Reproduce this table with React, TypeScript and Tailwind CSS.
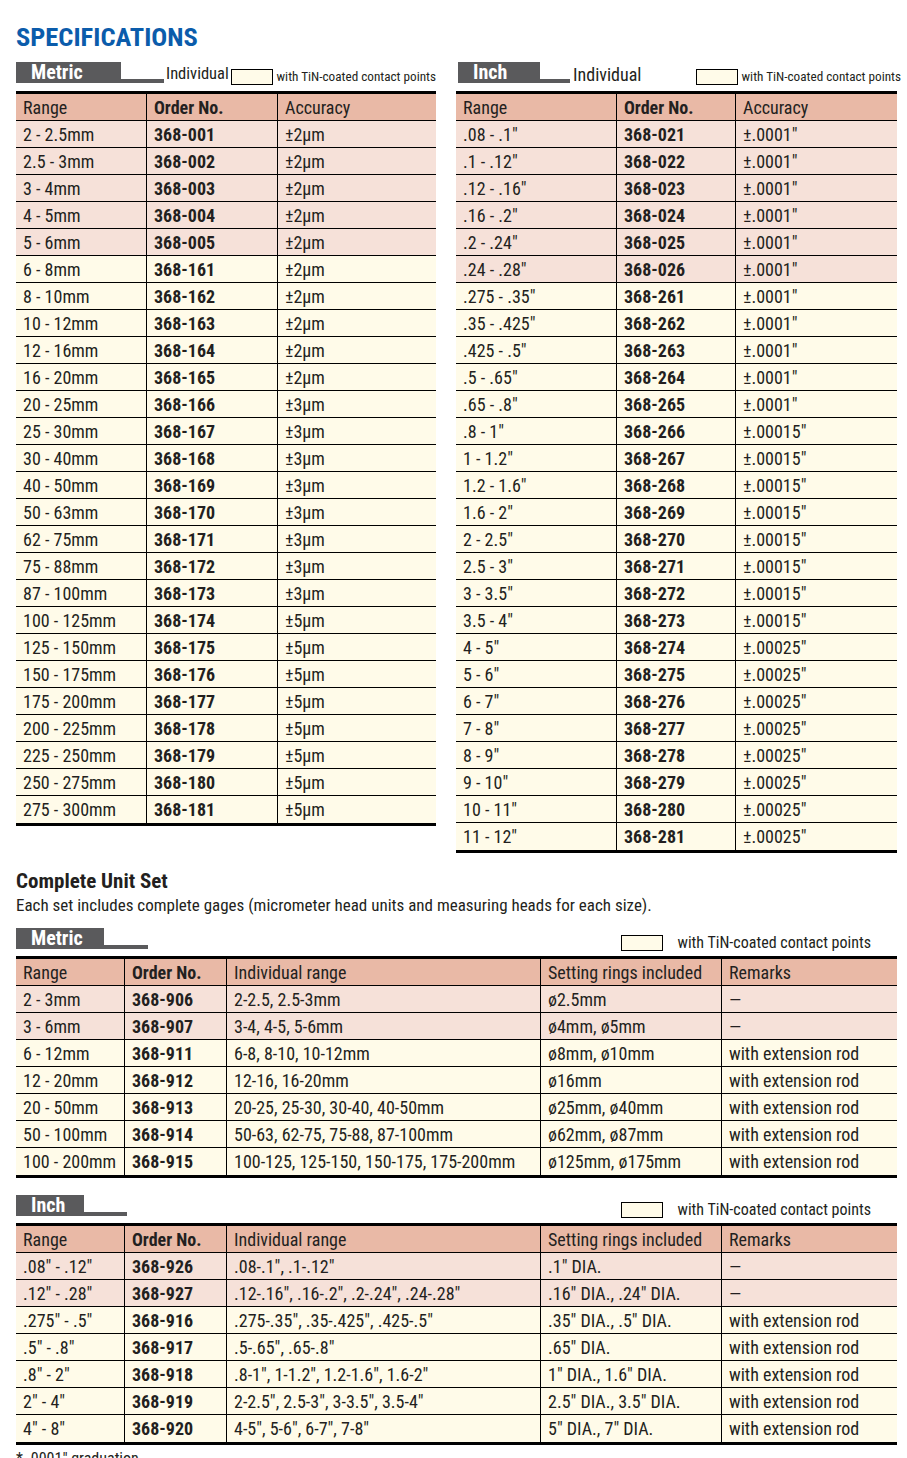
import React from "react";

const metric = [
  ["2 - 2.5mm", "368-001", "±2µm"],
  ["2.5 - 3mm", "368-002", "±2µm"],
  ["3 - 4mm", "368-003", "±2µm"],
  ["4 - 5mm", "368-004", "±2µm"],
  ["5 - 6mm", "368-005", "±2µm"],
  ["6 - 8mm", "368-161", "±2µm"],
  ["8 - 10mm", "368-162", "±2µm"],
  ["10 - 12mm", "368-163", "±2µm"],
  ["12 - 16mm", "368-164", "±2µm"],
  ["16 - 20mm", "368-165", "±2µm"],
  ["20 - 25mm", "368-166", "±3µm"],
  ["25 - 30mm", "368-167", "±3µm"],
  ["30 - 40mm", "368-168", "±3µm"],
  ["40 - 50mm", "368-169", "±3µm"],
  ["50 - 63mm", "368-170", "±3µm"],
  ["62 - 75mm", "368-171", "±3µm"],
  ["75 - 88mm", "368-172", "±3µm"],
  ["87 - 100mm", "368-173", "±3µm"],
  ["100 - 125mm", "368-174", "±5µm"],
  ["125 - 150mm", "368-175", "±5µm"],
  ["150 - 175mm", "368-176", "±5µm"],
  ["175 - 200mm", "368-177", "±5µm"],
  ["200 - 225mm", "368-178", "±5µm"],
  ["225 - 250mm", "368-179", "±5µm"],
  ["250 - 275mm", "368-180", "±5µm"],
  ["275 - 300mm", "368-181", "±5µm"],
];

const inch = [
  ['.08 - .1"', "368-021", '±.0001"'],
  ['.1 - .12"', "368-022", '±.0001"'],
  ['.12 - .16"', "368-023", '±.0001"'],
  ['.16 - .2"', "368-024", '±.0001"'],
  ['.2 - .24"', "368-025", '±.0001"'],
  ['.24 - .28"', "368-026", '±.0001"'],
  ['.275 - .35"', "368-261", '±.0001"'],
  ['.35 - .425"', "368-262", '±.0001"'],
  ['.425 - .5"', "368-263", '±.0001"'],
  ['.5 - .65"', "368-264", '±.0001"'],
  ['.65 - .8"', "368-265", '±.0001"'],
  ['.8 - 1"', "368-266", '±.00015"'],
  ['1 - 1.2"', "368-267", '±.00015"'],
  ['1.2 - 1.6"', "368-268", '±.00015"'],
  ['1.6 - 2"', "368-269", '±.00015"'],
  ['2 - 2.5"', "368-270", '±.00015"'],
  ['2.5 - 3"', "368-271", '±.00015"'],
  ['3 - 3.5"', "368-272", '±.00015"'],
  ['3.5 - 4"', "368-273", '±.00015"'],
  ['4 - 5"', "368-274", '±.00025"'],
  ['5 - 6"', "368-275", '±.00025"'],
  ['6 - 7"', "368-276", '±.00025"'],
  ['7 - 8"', "368-277", '±.00025"'],
  ['8 - 9"', "368-278", '±.00025"'],
  ['9 - 10"', "368-279", '±.00025"'],
  ['10 - 11"', "368-280", '±.00025"'],
  ['11 - 12"', "368-281", '±.00025"'],
];

const metricSet = [
  ["2 - 3mm", "368-906", "2-2.5, 2.5-3mm", "ø2.5mm", "—"],
  ["3 - 6mm", "368-907", "3-4, 4-5, 5-6mm", "ø4mm, ø5mm", "—"],
  ["6 - 12mm", "368-911", "6-8, 8-10, 10-12mm", "ø8mm, ø10mm", "with extension rod"],
  ["12 - 20mm", "368-912", "12-16, 16-20mm", "ø16mm", "with extension rod"],
  ["20 - 50mm", "368-913", "20-25, 25-30, 30-40, 40-50mm", "ø25mm, ø40mm", "with extension rod"],
  ["50 - 100mm", "368-914", "50-63, 62-75, 75-88, 87-100mm", "ø62mm, ø87mm", "with extension rod"],
  ["100 - 200mm", "368-915", "100-125, 125-150, 150-175, 175-200mm", "ø125mm, ø175mm", "with extension rod"],
];

const inchSet = [
  ['.08" - .12"', "368-926", '.08-.1", .1-.12"', '.1" DIA.', "—"],
  ['.12" - .28"', "368-927", '.12-.16", .16-.2", .2-.24", .24-.28"', '.16" DIA., .24" DIA.', "—"],
  ['.275" - .5"', "368-916", '.275-.35", .35-.425", .425-.5"', '.35" DIA., .5" DIA.', "with extension rod"],
  ['.5" - .8"', "368-917", '.5-.65", .65-.8"', '.65" DIA.', "with extension rod"],
  ['.8" - 2"', "368-918", '.8-1", 1-1.2", 1.2-1.6", 1.6-2"', '1" DIA., 1.6" DIA.', "with extension rod"],
  ['2" - 4"', "368-919", '2-2.5", 2.5-3", 3-3.5", 3.5-4"', '2.5" DIA., 3.5" DIA.', "with extension rod"],
  ['4" - 8"', "368-920", '4-5", 5-6", 6-7", 7-8"', '5" DIA., 7" DIA.', "with extension rod"],
];

// dark tab with the thin line running out of it
const Tab = ({ label, boxW, lineW }: { label: string; boxW: string; lineW: string }) => (
  <div className="flex items-end">
    <div className={`${boxW} h-[21px] bg-[#5a5a5c] text-white font-bold text-[20px] leading-[21px] pl-[15px]`}>{label}</div>
    <div className={`${lineW} h-[4px] bg-[#5a5a5c]`} />
  </div>
);

const Legend = ({ text, big }: { text: string; big?: boolean }) => (
  <div className="flex items-center whitespace-nowrap">
    <div className="w-[42px] h-[16px] border border-black bg-[#fffbe9]" />
    <span className={big ? "ml-[15px] text-[16px] leading-none" : "ml-[4px] text-[13.2px] leading-none"}>{text}</span>
  </div>
);

const Table = ({
  cols,
  head,
  rows,
  pink,
}: {
  cols: string;
  head: string[];
  rows: string[][];
  pink: number;
}) => (
  <div className="border-t-[3px] border-b-[3px] border-black">
    <div className={`grid ${cols} h-[27px] bg-[#e9b9a6] border-b border-black`}>
      {head.map((h, i) => (
        <div
          key={i}
          className={`flex items-center pl-[7px] whitespace-nowrap ${i < head.length - 1 ? "border-r border-black" : ""} ${i === 1 ? "font-bold" : ""}`}
        >
          {h}
        </div>
      ))}
    </div>
    {rows.map((r, ri) => (
      <div
        key={ri}
        className={`grid ${cols} h-[27px] ${ri < rows.length - 1 ? "border-b border-black" : ""} ${ri < pink ? "bg-[#f6e1d9]" : "bg-[#fffbe9]"}`}
      >
        {r.map((c, i) => (
          <div
            key={i}
            className={`flex items-center pl-[7px] whitespace-nowrap ${i < r.length - 1 ? "border-r border-black" : ""} ${i === 1 ? "font-bold" : ""}`}
          >
            {c}
          </div>
        ))}
      </div>
    ))}
  </div>
);

const setHead = ["Range", "Order No.", "Individual range", "Setting rings included", "Remarks"];
const setCols = "grid-cols-[109px_102px_314px_181px_175px]";

export default function App() {
  return (
    <div className="w-[907px] h-[1458px] overflow-hidden bg-white text-[#231f20] text-[18px] font-['Noto_Sans_Condensed','Noto_Sans_SemiCondensed','Roboto_Condensed','Open_Sans_Condensed','Liberation_Sans_Narrow','Roboto',sans-serif] font-stretch-condensed pl-[16px] pr-[10px] pt-[22px]">
      <h1 className="text-[#0b5cab] font-bold text-[26.5px] leading-[30px]">SPECIFICATIONS</h1>

      <div className="flex gap-[20px] mt-[10px]">
        {/* metric individual */}
        <div className="w-[420px]">
          <div className="flex items-end h-[21px]">
            <Tab label="Metric" boxW="w-[105px]" lineW="w-[43px]" />
            <span className="ml-[2px] text-[16.5px] leading-none mb-[1px]">Individual</span>
            <div className="ml-auto mb-[-2px]">
              <Legend text="with TiN-coated contact points" />
            </div>
          </div>
          <div className="mt-[8px]">
            <Table cols="grid-cols-[131px_131px_158px]" head={["Range", "Order No.", "Accuracy"]} rows={metric} pink={5} />
          </div>
        </div>

        {/* inch individual */}
        <div className="w-[441px]">
          <div className="flex items-end h-[21px] pl-[2px]">
            <Tab label="Inch" boxW="w-[82px]" lineW="w-[30px]" />
            <span className="ml-[3px] text-[18px] leading-none mb-[-1px]">Individual</span>
            <div className="ml-auto mr-[-4px] mb-[-2px]">
              <Legend text="with TiN-coated contact points" />
            </div>
          </div>
          <div className="mt-[8px]">
            <Table cols="grid-cols-[161px_119px_161px]" head={["Range", "Order No.", "Accuracy"]} rows={inch} pink={6} />
          </div>
        </div>
      </div>

      {/* complete unit set */}
      <div className="mt-[15px] w-[881px]">
        <h2 className="font-bold text-[21px] leading-[26px]">Complete Unit Set</h2>
        <p className="text-[17px] leading-[22px]">
          Each set includes complete gages (micrometer head units and measuring heads for each size).
        </p>

        <div className="flex items-end h-[21px] mt-[12px]">
          <Tab label="Metric" boxW="w-[88px]" lineW="w-[44px]" />
          <div className="ml-auto mr-[26px] mb-[-2px]">
            <Legend text="with TiN-coated contact points" big />
          </div>
        </div>
        <div className="mt-[7px]">
          <Table cols={setCols} head={setHead} rows={metricSet} pink={2} />
        </div>

        <div className="flex items-end h-[21px] mt-[17px]">
          <Tab label="Inch" boxW="w-[68px]" lineW="w-[43px]" />
          <div className="ml-auto mr-[26px] mb-[-2px]">
            <Legend text="with TiN-coated contact points" big />
          </div>
        </div>
        <div className="mt-[7px]">
          <Table cols={setCols} head={setHead} rows={inchSet} pink={2} />
        </div>

        <p className="text-[16px] leading-[20px] mt-[4px]">* .0001" graduation</p>
      </div>
    </div>
  );
}
